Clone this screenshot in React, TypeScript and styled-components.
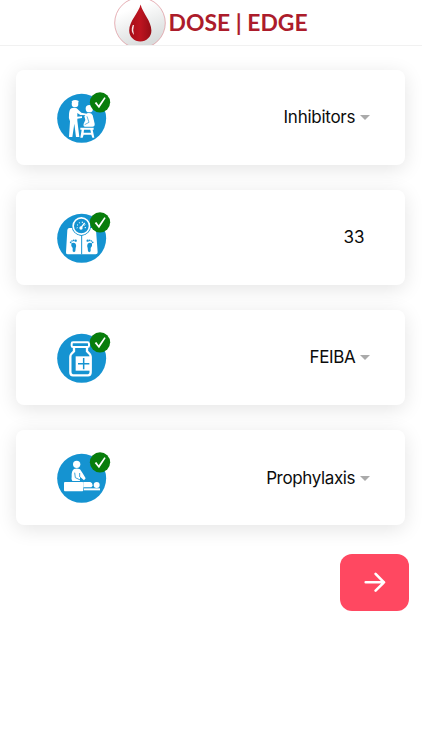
import React from "react";
import styled, { createGlobalStyle } from "styled-components";

const GlobalStyle = createGlobalStyle`
  * { box-sizing: border-box; }
  body { margin: 0; background: #fff; font-family: Inter, "Liberation Sans", sans-serif; color: #0c0c0c; }
`;

const Screen = styled.div`
  min-height: 750px;
  display: flex;
  flex-direction: column;
  overflow: hidden;
`;

const Header = styled.header`
  height: 45.5px;
  border-bottom: 1.5px solid #f1f1f1;
  display: flex;
  justify-content: center;
  overflow: hidden;
`;

const Logo = styled.svg`
  width: 212px;
  height: 45px;
  flex: none;
  overflow: hidden;
`;

const List = styled.main`
  display: flex;
  flex-direction: column;
  gap: 24.6px;
  padding: 24px 16.6px 0 16.4px;
`;

const Card = styled.section`
  height: 95.5px;
  border-radius: 8px;
  background: #fff;
  box-shadow: 0 4px 20px rgba(0, 0, 0, 0.11);
  display: flex;
  align-items: center;
  justify-content: space-between;
  padding: 0 35px 0 33.6px;
`;

const StepIcon = styled.svg`
  width: 66px;
  height: 62px;
  margin-bottom: 1px;
  flex: none;
`;

const Value = styled.div<{ $tracking: number; $plain?: boolean }>`
  display: flex;
  align-items: center;
  gap: 5.2px;
  font-size: 17px;
  line-height: 24px;
  letter-spacing: ${(p) => p.$tracking}px;
  padding-right: ${(p) => (p.$plain ? 6 : 0)}px;
`;

const Caret = styled.svg`
  width: 10px;
  height: 5px;
  margin-top: 1px;
`;

const Footer = styled.footer`
  display: flex;
  justify-content: flex-end;
  padding: 28.5px 12.7px 0;
`;

const NextButton = styled.button`
  width: 69.3px;
  height: 57px;
  border: 0;
  padding: 0;
  border-radius: 12px;
  background: #ff4861;
  display: flex;
  align-items: center;
  justify-content: center;
`;

const Arrow = styled.svg`
  width: 22px;
  height: 20px;
`;

const Treatment = () => (
  <g fill="#fff" stroke="none">
    <circle cx="75" cy="54" r="10" />
    <path d="M65 46Q74 38 86 45L85 50H66Z" />
    <path d="M64 67Q72 63 80 67L94 80L110 83L111 88L91 87L82 81V104L88 153H78L73 113L67 153H57L60 106Q55 98 57 84Q58 71 64 67Z" />
    <path d="M80 92L96 91V96L81 98Z" />
    <circle cx="118" cy="68" r="11" />
    <path d="M111 82Q124 79 128 88L134 113Q135 122 127 122H105Q99 122 101 113L106 102L103 91Z" />
    <path d="M111 91L117 109L104 116" fill="none" stroke="#1593d1" strokeWidth="2" />
    <path d="M91 125H131V131H128L133 155H127L124 146H101L98 155H91L95 131H91ZM102 131L101 140H123L121 131Z" fillRule="evenodd" />
  </g>
);

const Foot = () => (
  <g fill="#1593d1">
    <path d="M64 112Q71 108 77 113Q80 119 77 126L76 136Q72 141 68 136L68 126Q62 119 64 112Z" />
    <circle cx="62" cy="109" r="2.6" />
    <circle cx="66" cy="105" r="2.5" />
    <circle cx="71" cy="103" r="2.7" />
    <circle cx="77" cy="104" r="3.5" />
  </g>
);

const Scale = () => (
  <g>
    <path d="M58 66H70Q75 88 94 89Q113 88 118 66H132Q137 66 138 72L143 139Q143 145 137 145H53Q47 145 48 139L52 72Q53 66 58 66Z" fill="#fff" />
    <path d="M95 88V145" stroke="#1593d1" strokeWidth="3" />
    <circle cx="94" cy="60" r="29" fill="#1593d1" />
    <circle cx="94" cy="60" r="24.5" fill="none" stroke="#fff" strokeWidth="5" />
    <path d="M80 66L83 65M81 56L84 58M88 49L89 52M97 47V51M106 56L103 58M108 65L104 65" stroke="#fff" strokeWidth="3" />
    <path d="M93 65L104 51" stroke="#fff" strokeWidth="4" />
    <circle cx="93" cy="66" r="5" fill="#fff" />
    <Foot />
    <g transform="translate(190 0) scale(-1 1)"><Foot /></g>
  </g>
);

const Bottle = () => (
  <g fill="none" stroke="#fff">
    <rect x="65" y="49" width="52" height="14" rx="4" strokeWidth="6" />
    <path d="M72 65V76L64 84Q61 87 61 93V139Q61 148 69 148H114Q122 148 122 139V93Q122 87 119 84L111 76V65" strokeWidth="7" />
    <rect x="77" y="91" width="47" height="43" fill="#fff" stroke="none" />
    <path d="M101 96V130M84 113H118" stroke="#1593d1" strokeWidth="4.5" />
  </g>
);

const Massage = () => (
  <g fill="#fff">
    <circle cx="80" cy="55" r="11" />
    <path d="M72 69Q81 65 90 70L98 82L107 97L102 103L90 92V105H67Q63 102 65 91Q64 75 72 69Z" />
    <path d="M74 80L76 95L91 102M89 81V93" fill="none" stroke="#1593d1" strokeWidth="2.5" />
    <rect x="42" y="108" width="58" height="28" rx="3" />
    <path d="M100 108H121Q128 110 128 119L124 124H100Z" />
    <circle cx="140" cy="117" r="9" />
    <path d="M102 127H150V133H102Z" />
  </g>
);

const NextArrow = () => (
  <Arrow viewBox="0 0 22 20" fill="none" stroke="#fff" strokeWidth="2.6" strokeLinecap="round" strokeLinejoin="round" aria-hidden="true">
    <path d="M1.7 10.3H20M11.6 1.8L20 10.3L11.6 18.6" />
  </Arrow>
);

const steps = [
  { label: "Inhibitors", tracking: -0.26, Picture: Treatment, menu: true },
  { label: "33", tracking: -0.1, Picture: Scale, menu: false },
  { label: "FEIBA", tracking: -0.4, Picture: Bottle, menu: true },
  { label: "Prophylaxis", tracking: -0.36, Picture: Massage, menu: true },
];

export default function App() {
  return (
    <Screen>
      <GlobalStyle />
      <Header>
        <Logo viewBox="105 0 212 45" role="img" aria-label="Dose Edge">
          <defs>
            <linearGradient id="disc" x1="0" y1="0" x2="0.4" y2="1">
              <stop offset="0.3" stopColor="#fff" />
              <stop offset="1" stopColor="#d9dcdc" />
            </linearGradient>
            <linearGradient id="blood" x1="0" y1="0" x2="1" y2="0">
              <stop offset="0" stopColor="#a70d18" />
              <stop offset="0.5" stopColor="#bd1420" />
              <stop offset="1" stopColor="#950d16" />
            </linearGradient>
          </defs>
          <circle cx="140" cy="23" r="25.3" fill="url(#disc)" stroke="#df9da3" strokeWidth="0.8" />
          <path d="M140.6 4.5C138.5 13 129.2 21 129.2 30.5A11 11 0 0 0 151.4 30.5C151.4 21 142.6 13 140.6 4.5Z" fill="url(#blood)" />
          <path d="M132.8 25Q130.2 31 134 35Q132.4 30 134 25Z" fill="#fff" opacity="0.9" />
          <text x="168.6" y="30.5" textLength="139" lengthAdjust="spacingAndGlyphs" fontFamily="Lato, sans-serif" fontWeight="700" fontSize="22" fill="#ac1c2b">DOSE | EDGE</text>
        </Logo>
      </Header>
      <List>
        {steps.map(({ label, tracking, Picture, menu }) => (
          <Card key={label}>
            <StepIcon viewBox="0 0 198 186" aria-hidden="true">
              <circle cx="95" cy="97" r="73.5" fill="#1593d1" />
              <Picture />
              <circle cx="150" cy="49" r="30.5" fill="#087d0b" />
              <path d="M134 51L139 48L146 58L163 34L167 36L147 67Z" fill="#fff" />
            </StepIcon>
            <Value $tracking={tracking} $plain={!menu}>
              <span>{label}</span>
              {menu && <Caret viewBox="0 0 10 5"><path d="M0 0H10L5 5Z" fill="#aaa" /></Caret>}
            </Value>
          </Card>
        ))}
      </List>
      <Footer>
        <NextButton aria-label="Next"><NextArrow /></NextButton>
      </Footer>
    </Screen>
  );
}
